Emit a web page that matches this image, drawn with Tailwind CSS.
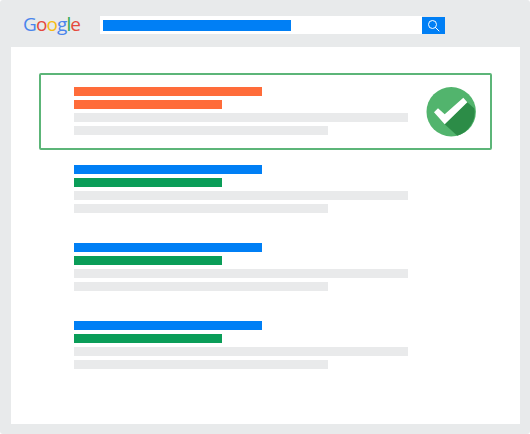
<!DOCTYPE html>
<html lang="en">
<head>
<meta charset="UTF-8" />
<title>Google search result</title>
<script src="https://cdn.jsdelivr.net/npm/@tailwindcss/browser@4"></script>
</head>
<body class="bg-white w-[530px] h-[434px] overflow-hidden">
  <div class="bg-[#e8eaeb] h-full rounded-[3px]">
  <!-- top bar -->
  <header class="h-[47px] flex items-start">
    <div class="ml-[23px] mt-[10px] w-[77px] text-[19px] leading-[28px] tracking-[-0.9px] font-medium font-['Open_Sans',sans-serif]">
      <span class="text-[#4a85ec]">G</span><span class="text-[#e5493d]">o</span><span class="text-[#f7bb14]">o</span><span class="text-[#4a85ec]">g</span><span class="text-[#2fa750]">l</span><span class="text-[#e5493d]">e</span>
    </div>
    <div class="mt-[16px] w-[322px] h-[18px] bg-white pl-[3px] pt-[4px]">
      <div class="w-[188px] h-[11px] bg-[#007ff5]"></div>
    </div>
    <div class="mt-[17px] w-[23px] h-[17px] bg-[#007ff5] flex items-center justify-center">
      <svg width="13" height="13" viewBox="0 0 13 13" fill="none" stroke="#fff" stroke-width="1">
        <circle cx="5.5" cy="5.5" r="4" />
        <path d="M8.5 8.5L12 12" stroke-linecap="round" />
      </svg>
    </div>
  </header>

  <!-- results panel -->
  <main class="ml-[11px] w-[509px] h-[377px] bg-white pt-[26px] pl-[28px]">
    <section class="w-[453px] h-[77px] border-2 border-[#5cb578] rounded-[2px] pl-[33px] pt-[12px] flex">
      <div class="w-[334px] flex flex-col gap-[4px]">
        <div class="w-[188px] h-[9px] bg-[#ff6c3a]"></div>
        <div class="w-[148px] h-[9px] bg-[#ff6c3a]"></div>
        <div class="w-[334px] h-[9px] bg-[#e9eaeb]"></div>
        <div class="w-[254px] h-[9px] bg-[#e9eaeb]"></div>
      </div>
      <svg class="ml-[18px]" width="50" height="50" viewBox="0 0 50 50">
        <circle cx="25.2" cy="24.8" r="24.7" fill="#52b46d" />
        <path d="M18.7 37.3L41.3 15.3L48.4 21.5A24.7 24.7 0 0 1 31.3 48.8Z" fill="#2c8c47" />
        <path d="M8 25.3L12 21.3L18.7 27.3L37.3 10.7L41.3 15.3L18.7 37.3Z" fill="#fff" />
      </svg>
    </section>

    <div class="mt-[15px] pl-[35px] flex flex-col gap-[30px]">
      <article class="flex flex-col gap-[4px]">
        <div class="w-[188px] h-[9px] bg-[#007ff5]"></div>
        <div class="w-[148px] h-[9px] bg-[#0a9d58]"></div>
        <div class="w-[334px] h-[9px] bg-[#e9eaeb]"></div>
        <div class="w-[254px] h-[9px] bg-[#e9eaeb]"></div>
      </article>
      <article class="flex flex-col gap-[4px]">
        <div class="w-[188px] h-[9px] bg-[#007ff5]"></div>
        <div class="w-[148px] h-[9px] bg-[#0a9d58]"></div>
        <div class="w-[334px] h-[9px] bg-[#e9eaeb]"></div>
        <div class="w-[254px] h-[9px] bg-[#e9eaeb]"></div>
      </article>
      <article class="flex flex-col gap-[4px]">
        <div class="w-[188px] h-[9px] bg-[#007ff5]"></div>
        <div class="w-[148px] h-[9px] bg-[#0a9d58]"></div>
        <div class="w-[334px] h-[9px] bg-[#e9eaeb]"></div>
        <div class="w-[254px] h-[9px] bg-[#e9eaeb]"></div>
      </article>
    </div>
  </main>
  </div>
</body>
</html>
